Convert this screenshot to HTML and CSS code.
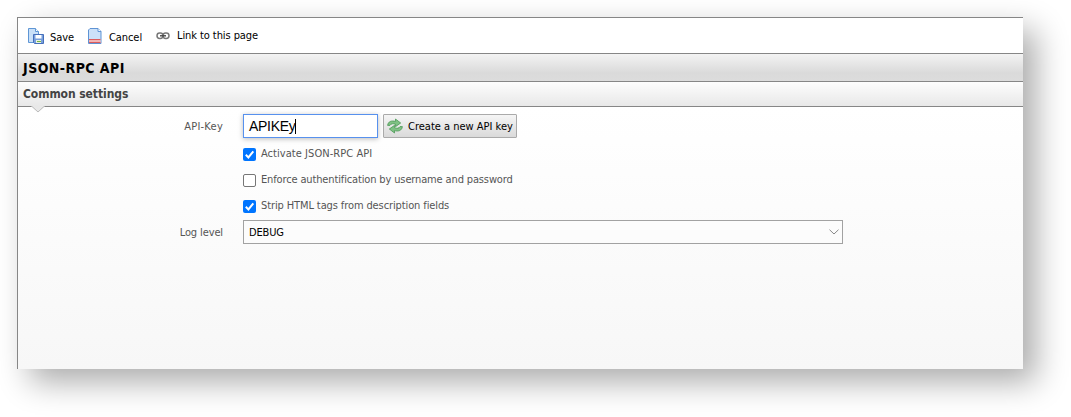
FILE: index.html
```html
<!DOCTYPE html>
<html lang="en">
<head>
<meta charset="utf-8">
<title>JSON-RPC API</title>
<link rel="stylesheet" href="styles.css">
</head>
<body>
<main class="panel">
  <nav class="toolbar">
    <a class="tool save"><svg width="17" height="17" viewBox="0 0 17 17"><path d="M1.500.5h7l3 3v11h-10z" fill="#c9e0f8" stroke="#5f96d5"/><path d="M8.500.5v3h3" fill="#fff" stroke="#5f96d5"/><path d="M6.500 6.500h10v9h-9l-1-1z" fill="#789fdc" stroke="#456fbb"/><path d="M8.500 7h6v3.500h-6z" fill="#fff"/><path d="M9 12h5v3H9z" fill="#e9f1e0"/><path d="M10 13h4v1h-4z" fill="#76b442"/></svg><span class="t">Save</span></a>
    <a class="tool cancel"><svg width="16" height="17" viewBox="0 0 16 17"><path d="M3 .5h8l3 3v12H1.500V2z" fill="#cce1f8" stroke="#5f93d4"/><path d="M11 .5v3h3" fill="#fff" stroke="#5f93d4"/><path d="M2 11h11.500v4H2z" fill="#f3b4b4"/><path d="M2 11.500h11.500M2 14.500h11.500" stroke="#dc5c5c"/></svg><span class="t">Cancel</span></a>
    <a class="tool link"><svg width="14" height="8" viewBox="0 0 14 8" fill="none"><rect x="1" y="1" width="6" height="5.500" rx="2.700" stroke="#777" stroke-width="1.500"/><rect x="7" y="1" width="6" height="5.500" rx="2.700" stroke="#777" stroke-width="1.500"/><path d="M4 3.800h6" stroke="#444" stroke-width="1.400"/></svg><span class="t">Link to this page</span></a>
  </nav>
  <h1 class="title"><span class="t">JSON-RPC API</span></h1>
  <h2 class="section"><span class="t">Common settings</span><svg class="notch" width="14" height="7" viewBox="0 0 14 7"><path d="M0 0h14L7 6z" fill="#e8e8e8"/><path d="M1 .5l6 5.500 6-5.500" fill="none" stroke="#bbb"/></svg></h2>
  <form class="form">
    <div class="row key-row">
      <label class="label api-label"><span class="t">API-Key</span></label>
      <div class="input"><span class="value">APIKEy</span><i class="caret"></i></div>
      <div class="button"><svg width="16" height="16" viewBox="0 0 16 16" stroke="#3f914b" stroke-width=".7" fill="#7fc184"><path d="M.6 7.400C1 3.500 4.500 2.200 8.500 3.400V1l5.200 4-5.200 3.700V6.300C6 5.300 4 5.600 3 7.400z"/><path d="M15.400 8.600c-.4 3.900-3.900 5.200-7.900 4V15l-5.200-4 5.200-3.700v2.400c2.500 1 4.500.7 5.500-1.100z"/></svg><span class="t">Create a new API key</span></div>
    </div>
    <label class="check c1"><span class="box on"><svg viewBox="0 0 13 13"><path d="M2.800 6.800l2.600 2.600 4.900-6"/></svg></span><span class="t">Activate JSON-RPC API</span></label>
    <label class="check c2"><span class="box"></span><span class="t">Enforce authentification by username and password</span></label>
    <label class="check c3"><span class="box on"><svg viewBox="0 0 13 13"><path d="M2.800 6.800l2.600 2.600 4.900-6"/></svg></span><span class="t">Strip HTML tags from description fields</span></label>
    <div class="row log-row">
      <label class="label log-label"><span class="t">Log level</span></label>
      <div class="select"><span class="t">DEBUG</span><svg width="10" height="6" viewBox="0 0 10 6"><path d="M.5.700L5 5 9.500.700" fill="none" stroke="#888"/></svg></div>
    </div>
  </form>
</main>
</body>
</html>
```
FILE: styles.css
```css
* { box-sizing: border-box; }
body { margin: 0; height: 417px; padding: 17px 0 0 17px; background: #fff; overflow: hidden; font: 11px/14px "DejaVu Sans Condensed", "DejaVu Sans", sans-serif; font-stretch: condensed; color: #000; }
.t { white-space: nowrap; }
svg { display: block; flex: none; }
.panel { width: 1006px; height: 352px; border-left: 1px solid #868686; border-top: 1px solid #868686; background: linear-gradient(#fff 89px, #f7f7f7); box-shadow: 13px 13px 30px rgba(0,0,0,.33); }
.toolbar { height: 35px; display: flex; align-items: flex-start; background: #fff; }
.tool { display: flex; }
.tool .t { letter-spacing: -.08px; }
.save { padding: 10px 0 0 9px; width: 69px; }
.save .t { margin: 3px 0 0 6px; }
.cancel { padding-top: 10px; width: 69px; }
.cancel .t { margin: 3px 0 0 6px; }
.link { padding-top: 10px; }
.link svg { margin-top: 4px; }
.link .t { margin: 1px 0 0 7px; }
.title, .section { margin: 0; padding-left: 5px; border-top: 1px solid #868686; }
.title { height: 28px; font-size: 14px; line-height: 29px; background: linear-gradient(#f3f3f3, #dadada 70%, #dcdcdc); }
.title .t { letter-spacing: .45px; }
.section { height: 26px; border-bottom: 1px solid #868686; position: relative; font-size: 12px; line-height: 25px; color: #444; background: linear-gradient(#fdfdfd, #e8e8e8); }
.section .t { letter-spacing: -.07px; }
.notch { position: absolute; left: 13px; top: 24px; }
.form { color: #555; padding-top: 7px; }
.row { display: flex; }
.label { width: 205px; text-align: right; padding-top: 6px; }
.api-label .t { letter-spacing: .25px; }
.log-label .t { letter-spacing: -.12px; }
.input { margin-left: 20px; width: 135px; height: 24px; border: 1px solid #5791ee; background: #fff; padding-left: 5px; display: flex; align-items: center; font: 14px "Liberation Sans", Arial, sans-serif; color: #000; box-shadow: 0 1px 5px #bbb; }
.value { letter-spacing: -.3px; }
.caret { width: 1px; height: 15px; background: #000; }
.button { margin-left: 5px; width: 134px; height: 24px; border: 1px solid #aaa; border-radius: 1px; background: linear-gradient(#f5f5f5, #dadada); padding-left: 3px; display: flex; align-items: center; color: #000; }
.button .t { margin: 1px 0 0 5px; }
.check { display: flex; margin-left: 225px; height: 13px; align-items: center; }
.check .t { margin: -1px 0 0 5px; }
.c1 { margin-top: 10px; }
.c1 .t { letter-spacing: .05px; }
.c2 { margin-top: 13px; }
.c2 .t { letter-spacing: -.14px; }
.c3 { margin-top: 13px; }
.c3 .t { letter-spacing: -.11px; }
.box { width: 13px; height: 13px; border: 1px solid #767676; border-radius: 2px; background: #fff; flex: none; }
.box.on { border: 0; background: #0075ff; }
.box path { fill: none; stroke: #fff; stroke-width: 2; }
.log-row { margin-top: 7px; }
.select { margin-left: 20px; width: 600px; height: 24px; border: 1px solid #a2a2a2; padding: 0 3px 0 5px; display: flex; align-items: center; justify-content: space-between; color: #000; background: #fcfcfc; }
.select .t { margin-top: 1px; letter-spacing: -.15px; }
```
